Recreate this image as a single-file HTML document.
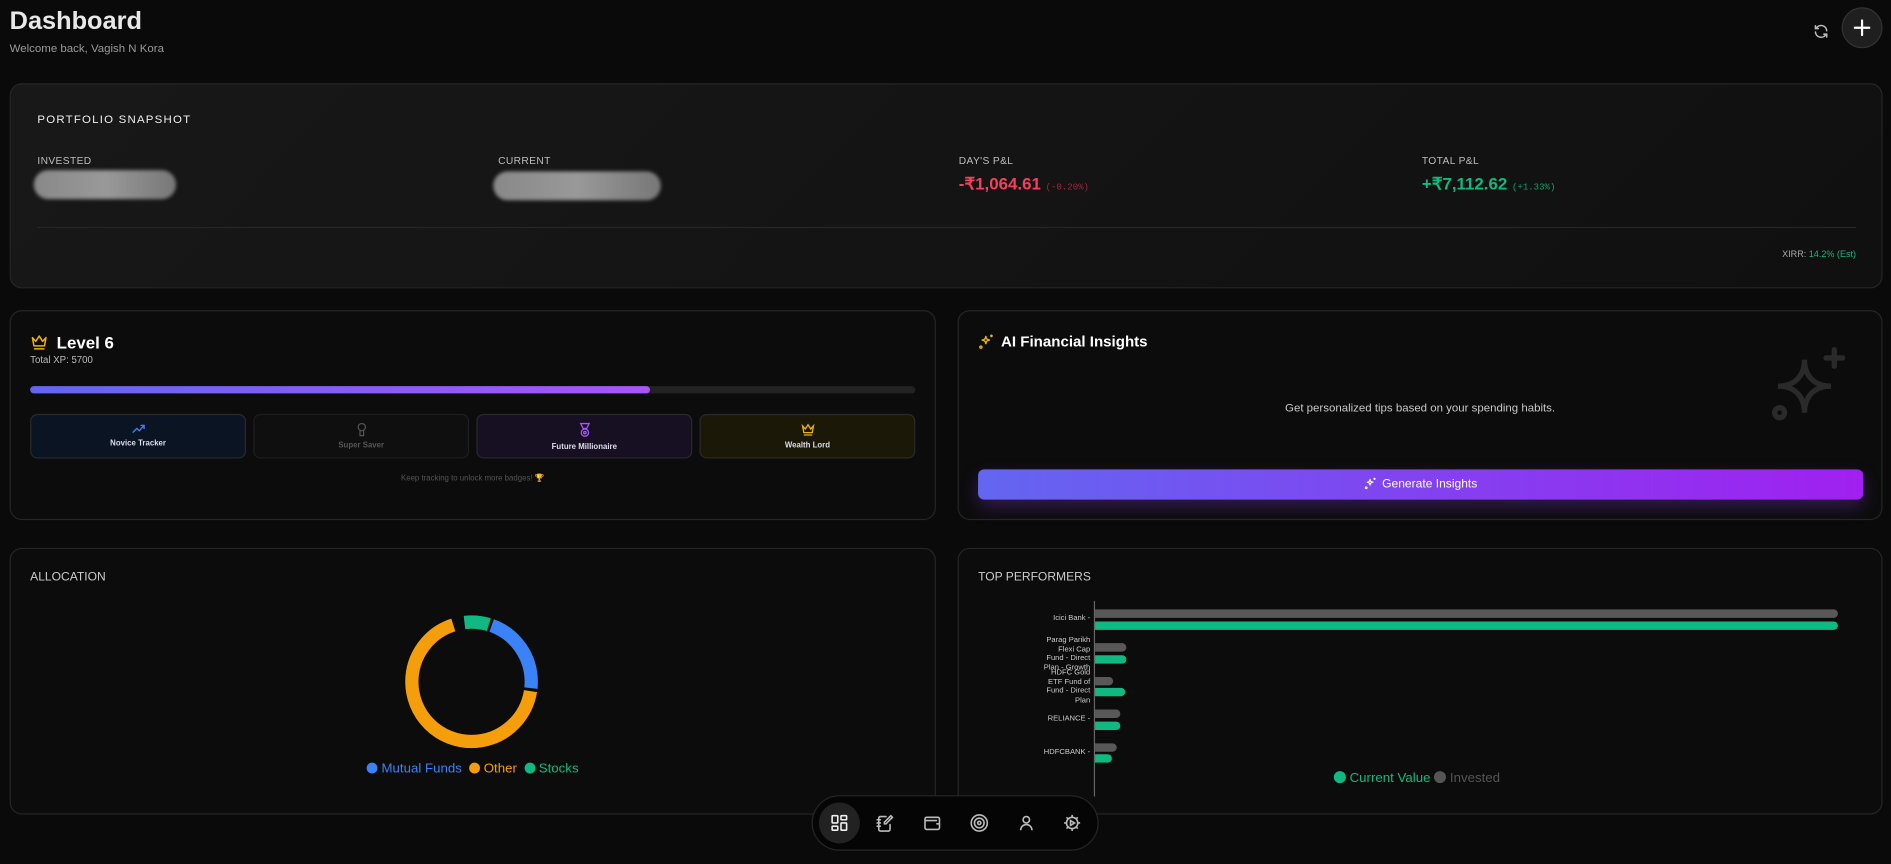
<!DOCTYPE html>
<html><head><meta charset="utf-8"><style>
*{box-sizing:border-box;margin:0;padding:0}
html,body{width:1891px;height:864px;overflow:hidden;background:#0a0a0a}
#s{position:absolute;left:0;top:0;width:1568px;height:716px;transform:scale(1.206,1.2067);transform-origin:0 0;font-family:"Liberation Sans",sans-serif;color:#fff}
.a{position:absolute}
.card{position:absolute;border:1px solid #262626;border-radius:10px;background:#0c0c0c}
.lbl{font-size:8.5px;color:#bdbdbd;letter-spacing:.3px}
.badge{position:absolute;top:343px;width:179px;height:37px;border-radius:6px;border:1px solid #2a2a2a;text-align:center;font-size:6.5px;font-weight:bold}
.badge svg{display:block;margin:6px auto 4px}
.blur{position:absolute;height:24px;border-radius:12px;background:linear-gradient(90deg,#888,#999 50%,#777);filter:blur(1.5px)}
.cl{position:absolute;font-size:6.3px;color:#ccc;text-align:right;right:664px;line-height:7.6px}
.bar{position:absolute;left:908px;height:7px;border-radius:0 4px 4px 0}
.g{background:#585858}.gr{background:#10b981}
</style></head><body><div id="s">
<div class="a" style="left:8px;top:6px;font-size:21px;font-weight:bold;color:#e8e8e8">Dashboard</div>
<div class="a" style="left:8px;top:35px;font-size:9.5px;color:#9a9a9a">Welcome back, Vagish N Kora</div>
<svg class="a" style="left:1503px;top:19px" width="14" height="14" viewBox="0 0 24 24" fill="none" stroke="#bbb" stroke-width="2.2" stroke-linecap="round"><path d="M20 11a8 8 0 0 0-14.5-4M4 4v4h4M4 13a8 8 0 0 0 14.5 4M20 20v-4h-4"/></svg>
<div class="a" style="left:1527px;top:6px;width:34px;height:34px;border-radius:50%;background:#1f1f1f;border:1px solid #333"></div>
<svg class="a" style="left:1537px;top:16px" width="14" height="14" viewBox="0 0 14 14" stroke="#fff" stroke-width="1.8" stroke-linecap="round"><path d="M7 1v12M1 7h12"/></svg>

<div class="card" style="left:8px;top:69px;width:1553px;height:170px;background:linear-gradient(135deg,#181818,#101010)">
</div>
<div class="a" style="left:31px;top:94px;font-size:9.5px;letter-spacing:1px;color:#eee">PORTFOLIO SNAPSHOT</div>
<div class="a lbl" style="left:31px;top:128px">INVESTED</div>
<div class="a lbl" style="left:413px;top:128px">CURRENT</div>
<div class="a lbl" style="left:795px;top:128px">DAY'S P&amp;L</div>
<div class="a lbl" style="left:1179px;top:128px">TOTAL P&amp;L</div>
<div class="blur" style="left:28px;top:141px;width:118px"></div>
<div class="blur" style="left:409px;top:142px;width:139px"></div>
<div class="a" style="left:795px;top:144px;font-size:14px;font-weight:bold;color:#f43f5e">-₹1,064.61 <span style="font-size:7.5px;font-weight:normal;font-family:'Liberation Mono',monospace;color:#9f2a40">(-0.20%)</span></div>
<div class="a" style="left:1179px;top:144px;font-size:14px;font-weight:bold;color:#10b981">+₹7,112.62 <span style="font-size:7.5px;font-weight:normal;font-family:'Liberation Mono',monospace;color:#10a070">(+1.33%)</span></div>
<div class="a" style="left:31px;top:188px;width:1508px;height:1px;background:#262626"></div>
<div class="a" style="right:29px;top:206px;font-size:7.5px;color:#aaa">XIRR: <span style="color:#10b981">14.2% (Est)</span></div>

<div class="card" style="left:8px;top:257px;width:768px;height:174px"></div>
<svg class="a" style="left:25px;top:276px" width="15" height="15" viewBox="0 0 24 24" fill="none" stroke="#eab308" stroke-width="2" stroke-linejoin="round"><path d="M3 6l4.5 5L12 4l4.5 7L21 6l-2 11H5z"/><path d="M5 21h14"/></svg>
<div class="a" style="left:47px;top:276px;font-size:14px;font-weight:bold">Level 6</div>
<div class="a" style="left:25px;top:294px;font-size:8px;color:#bbb">Total XP: 5700</div>
<div class="a" style="left:25px;top:320px;width:734px;height:6px;border-radius:3px;background:#222"></div>
<div class="a" style="left:25px;top:320px;width:514px;height:6px;border-radius:3px;background:linear-gradient(90deg,#6366f1,#a855f7)"></div>
<div class="badge" style="left:25px;background:#0b1422;color:#dde">
<svg width="12" height="10" viewBox="0 0 24 20" fill="none" stroke="#3b82f6" stroke-width="2.2"><path d="M2 17l7-7 4 4 8-9M15 5h6v6"/></svg>Novice Tracker</div>
<div class="badge" style="left:210px;background:#0f0f0f;color:#555;border-color:#1e1e1e">
<svg width="10" height="12" viewBox="0 0 20 24" fill="none" stroke="#555" stroke-width="2"><circle cx="10" cy="8" r="6"/><path d="M7 14v8h6v-8"/></svg>Super Saver</div>
<div class="badge" style="left:395px;background:#170f22;color:#dde">
<svg width="10" height="13" viewBox="0 0 20 26" fill="none" stroke="#a855f7" stroke-width="2.2"><path d="M3 2h14l-4 8H7z"/><circle cx="10" cy="17" r="6"/><circle cx="10" cy="17" r="2"/></svg>Future Millionaire</div>
<div class="badge" style="left:580px;background:#1c1808;color:#dde">
<svg width="12" height="12" viewBox="0 0 24 24" fill="none" stroke="#eab308" stroke-width="2.2"><path d="M3 6l4.5 5L12 4l4.5 7L21 6l-2 11H5z"/><path d="M5 21h14"/></svg>Wealth Lord</div>
<div class="a" style="left:0;width:784px;top:392px;text-align:center;font-size:6.5px;color:#555">Keep tracking to unlock more badges! 🏆</div>

<div class="card" style="left:794px;top:257px;width:767px;height:174px"></div>
<svg class="a" style="left:811px;top:276px" width="14" height="14" viewBox="0 0 24 24" fill="none" stroke="#eab308" stroke-width="2"><path d="M11 4c0 4 2 6 6 6-4 0-6 2-6 6 0-4-2-6-6-6 4 0 6-2 6-6z"/><path d="M19 2v4M17 4h4"/><circle cx="4" cy="20" r="1.5"/></svg>
<div class="a" style="left:830px;top:276px;font-size:12.5px;font-weight:bold">AI Financial Insights</div>
<svg class="a" style="left:1465px;top:287px" width="68" height="66" viewBox="0 0 24 24" fill="none" stroke="#2a2a2a" stroke-width="1.6" stroke-linecap="round"><path d="M11 4c0 5 3 8 8 8-5 0-8 3-8 8 0-5-3-8-8-8 5 0 8-3 8-8z"/><path d="M20 1v5M17.5 3.5h5"/><circle cx="3.5" cy="20" r="1.5"/></svg>
<div class="a" style="left:794px;width:767px;top:333px;text-align:center;font-size:9.5px;color:#c8c8c8">Get personalized tips based on your spending habits.</div>
<div class="a" style="left:811px;top:389px;width:734px;height:25px;border-radius:5px;background:linear-gradient(90deg,#6366f1,#a020f0);box-shadow:0 6px 14px rgba(140,60,240,.3);text-align:center;font-size:10px;line-height:25px">
<svg style="vertical-align:-2px;margin-right:4px" width="11" height="11" viewBox="0 0 24 24" fill="none" stroke="#fff" stroke-width="2"><path d="M11 4c0 4 2 6 6 6-4 0-6 2-6 6 0-4-2-6-6-6 4 0 6-2 6-6z"/><path d="M19 2v4M17 4h4"/><circle cx="4" cy="20" r="1.5"/></svg>Generate Insights</div>

<div class="card" style="left:8px;top:454px;width:768px;height:221px"></div>
<div class="a" style="left:25px;top:473px;font-size:10px;color:#ccc">ALLOCATION</div>
<svg class="a" style="left:331px;top:505px" width="120" height="120" viewBox="0 0 120 120">
<g transform="rotate(-90 60 60)" fill="none" stroke-width="11">
<circle cx="60" cy="60" r="49.5" stroke="#10b981" stroke-dasharray="20.6 290.4" stroke-dashoffset="6"/>
<circle cx="60" cy="60" r="49.5" stroke="#3b82f6" stroke-dasharray="66 245" stroke-dashoffset="-17"/>
<circle cx="60" cy="60" r="49.5" stroke="#f59e0b" stroke-dasharray="210 101" stroke-dashoffset="-85.5"/>
</g></svg>
<div class="a" style="left:0;width:784px;top:631px;text-align:center;font-size:11px">
<span style="display:inline-block;width:9px;height:9px;border-radius:50%;background:#3b82f6;vertical-align:-1px"></span> <span style="color:#3b82f6">Mutual Funds</span>
<span style="display:inline-block;width:9px;height:9px;border-radius:50%;background:#f59e0b;vertical-align:-1px;margin-left:3px"></span> <span style="color:#f59e0b">Other</span>
<span style="display:inline-block;width:9px;height:9px;border-radius:50%;background:#10b981;vertical-align:-1px;margin-left:3px"></span> <span style="color:#10b981">Stocks</span></div>

<div class="card" style="left:794px;top:454px;width:767px;height:221px"></div>
<div class="a" style="left:811px;top:473px;font-size:10px;color:#ccc">TOP PERFORMERS</div>
<div class="a" style="left:907px;top:498px;width:1px;height:162px;background:#666"></div>
<div class="cl" style="top:509px">Icici Bank -</div>
<div class="cl" style="top:527px">Parag Parikh<br>Flexi Cap<br>Fund - Direct<br>Plan - Growth</div>
<div class="cl" style="top:554px">HDFC Gold<br>ETF Fund of<br>Fund - Direct<br>Plan</div>
<div class="cl" style="top:592px">RELIANCE -</div>
<div class="cl" style="top:620px">HDFCBANK -</div>
<div class="bar g" style="top:505px;width:616px"></div>
<div class="bar gr" style="top:515px;width:616px"></div>
<div class="bar g" style="top:533px;width:26px"></div>
<div class="bar gr" style="top:543px;width:26px"></div>
<div class="bar g" style="top:561px;width:15px"></div>
<div class="bar gr" style="top:570px;width:25px"></div>
<div class="bar g" style="top:588px;width:21px"></div>
<div class="bar gr" style="top:598px;width:21px"></div>
<div class="bar g" style="top:616px;width:18px"></div>
<div class="bar gr" style="top:625px;width:14px"></div>
<div class="a" style="left:1106px;top:639px;font-size:11px"><span style="display:inline-block;width:10px;height:10px;border-radius:50%;background:#10b981;vertical-align:-1px"></span> <span style="color:#10b981">Current Value</span> <span style="display:inline-block;width:10px;height:10px;border-radius:50%;background:#555;vertical-align:-1px"></span> <span style="color:#555">Invested</span></div>

<div class="a" style="left:673px;top:659px;width:238px;height:46px;border-radius:23px;background:#050505;border:1px solid #262626"></div>
<div class="a" style="left:679px;top:665px;width:34px;height:34px;border-radius:50%;background:#222"></div>
<svg class="a" style="left:688px;top:674px" width="16" height="16" viewBox="0 0 24 24" fill="none" stroke="#eee" stroke-width="2"><rect x="3" y="3" width="7" height="9" rx="1"/><rect x="14" y="3" width="7" height="5" rx="1"/><rect x="14" y="12" width="7" height="9" rx="1"/><rect x="3" y="16" width="7" height="5" rx="1"/></svg>
<svg class="a" style="left:726px;top:674px" width="16" height="16" viewBox="0 0 24 24" fill="none" stroke="#bbb" stroke-width="2" stroke-linecap="round"><path d="M13 4H6a2 2 0 0 0-2 2v14a2 2 0 0 0 2 2h10a2 2 0 0 0 2-2v-6"/><path d="M2 8h4M2 12h4M2 16h4"/><path d="M19 3l2 2-8 8h-2v-2z"/></svg>
<svg class="a" style="left:765px;top:674px" width="16" height="16" viewBox="0 0 24 24" fill="none" stroke="#bbb" stroke-width="2"><rect x="3" y="5" width="18" height="15" rx="2"/><path d="M3 9h15M17 13h4"/></svg>
<svg class="a" style="left:804px;top:674px" width="16" height="16" viewBox="0 0 24 24" fill="none" stroke="#bbb" stroke-width="2"><circle cx="12" cy="12" r="10"/><circle cx="12" cy="12" r="6"/><circle cx="12" cy="12" r="2"/></svg>
<svg class="a" style="left:843px;top:674px" width="16" height="16" viewBox="0 0 24 24" fill="none" stroke="#bbb" stroke-width="2"><circle cx="12" cy="8" r="4"/><path d="M5 21a7 7 0 0 1 14 0"/></svg>
<svg class="a" style="left:881px;top:674px" width="16" height="16" viewBox="0 0 24 24" fill="none" stroke="#bbb" stroke-width="2"><circle cx="12" cy="12" r="7"/><path d="M12 2v3M12 19v3M2 12h3M19 12h3M5 5l2 2M17 17l2 2M5 19l2-2M17 7l2-2"/><path d="M10 9l5 3-5 3z"/></svg>
</div></body></html>
